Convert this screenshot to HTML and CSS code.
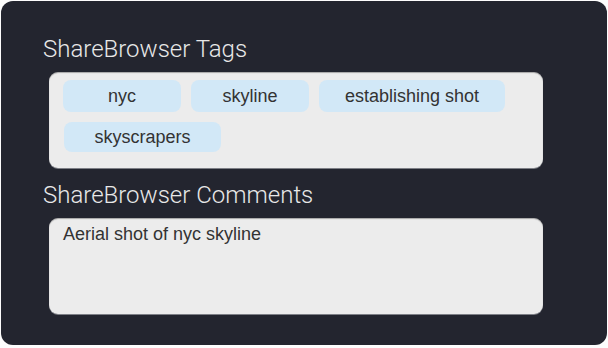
FILE: index.html
```html
<!DOCTYPE html>
<html lang="en">
<head>
  <meta charset="UTF-8" />
  <meta name="viewport" content="width=device-width, initial-scale=1.0" />
  <title>ShareBrowser Metadata</title>
  <link rel="stylesheet" href="styles.css">
</head>
<body>
  <div class="panel">
    <h2 class="section-title">ShareBrowser Tags</h2>
    <div class="field tags">
      <span class="tag tag-nyc">nyc</span>
      <span class="tag tag-skyline">skyline</span>
      <span class="tag tag-establishing">establishing shot</span>
      <span class="tag tag-skyscrapers">skyscrapers</span>
    </div>

    <h2 class="section-title section-title-comments">ShareBrowser Comments</h2>
    <div class="field comments">Aerial shot of nyc skyline</div>
  </div>
</body>
</html>
```

FILE: styles.css
```css
body {
  margin: 0;
  background: #fdfdfd;
  font-family: "Liberation Sans", Arial, sans-serif;
}
.panel {
  margin: 1px;
  width: 606px;
  height: 344px;
  box-sizing: border-box;
  background: #23252f;
  border-radius: 12px;
  padding: 34px 0 0 42px;
}
.section-title {
  margin: 0;
  font-family: Roboto, "Liberation Sans", sans-serif;
  font-weight: 300;
  font-size: 24px;
  line-height: 28px;
  color: #e8e8e8;
}
.section-title-comments {
  margin-top: 13px;
}
.field {
  margin: 9px 0 0 6px;
  width: 494px;
  height: 96px;
  box-sizing: border-box;
  background: #ececec;
  border-radius: 9px;
  box-shadow: inset 0 1px 1px rgba(0, 0, 0, 0.3), 0 1px 0 #7d7f86;
  color: #333;
  font-size: 18px;
  line-height: 22px;
}
.tags {
  display: flex;
  flex-wrap: wrap;
  align-content: flex-start;
  gap: 10px 10px;
  padding: 8px 14px;
}
.tag {
  display: flex;
  align-items: center;
  justify-content: center;
  height: 32px;
  background: #d2e8f7;
  border-radius: 8px;
}
.tag-nyc { width: 118px; }
.tag-skyline { width: 118px; }
.tag-establishing { width: 186px; }
.tag-skyscrapers { width: 157px; height: 30px; margin-left: 1px; }
.comments {
  padding: 5px 14px;
}
```
